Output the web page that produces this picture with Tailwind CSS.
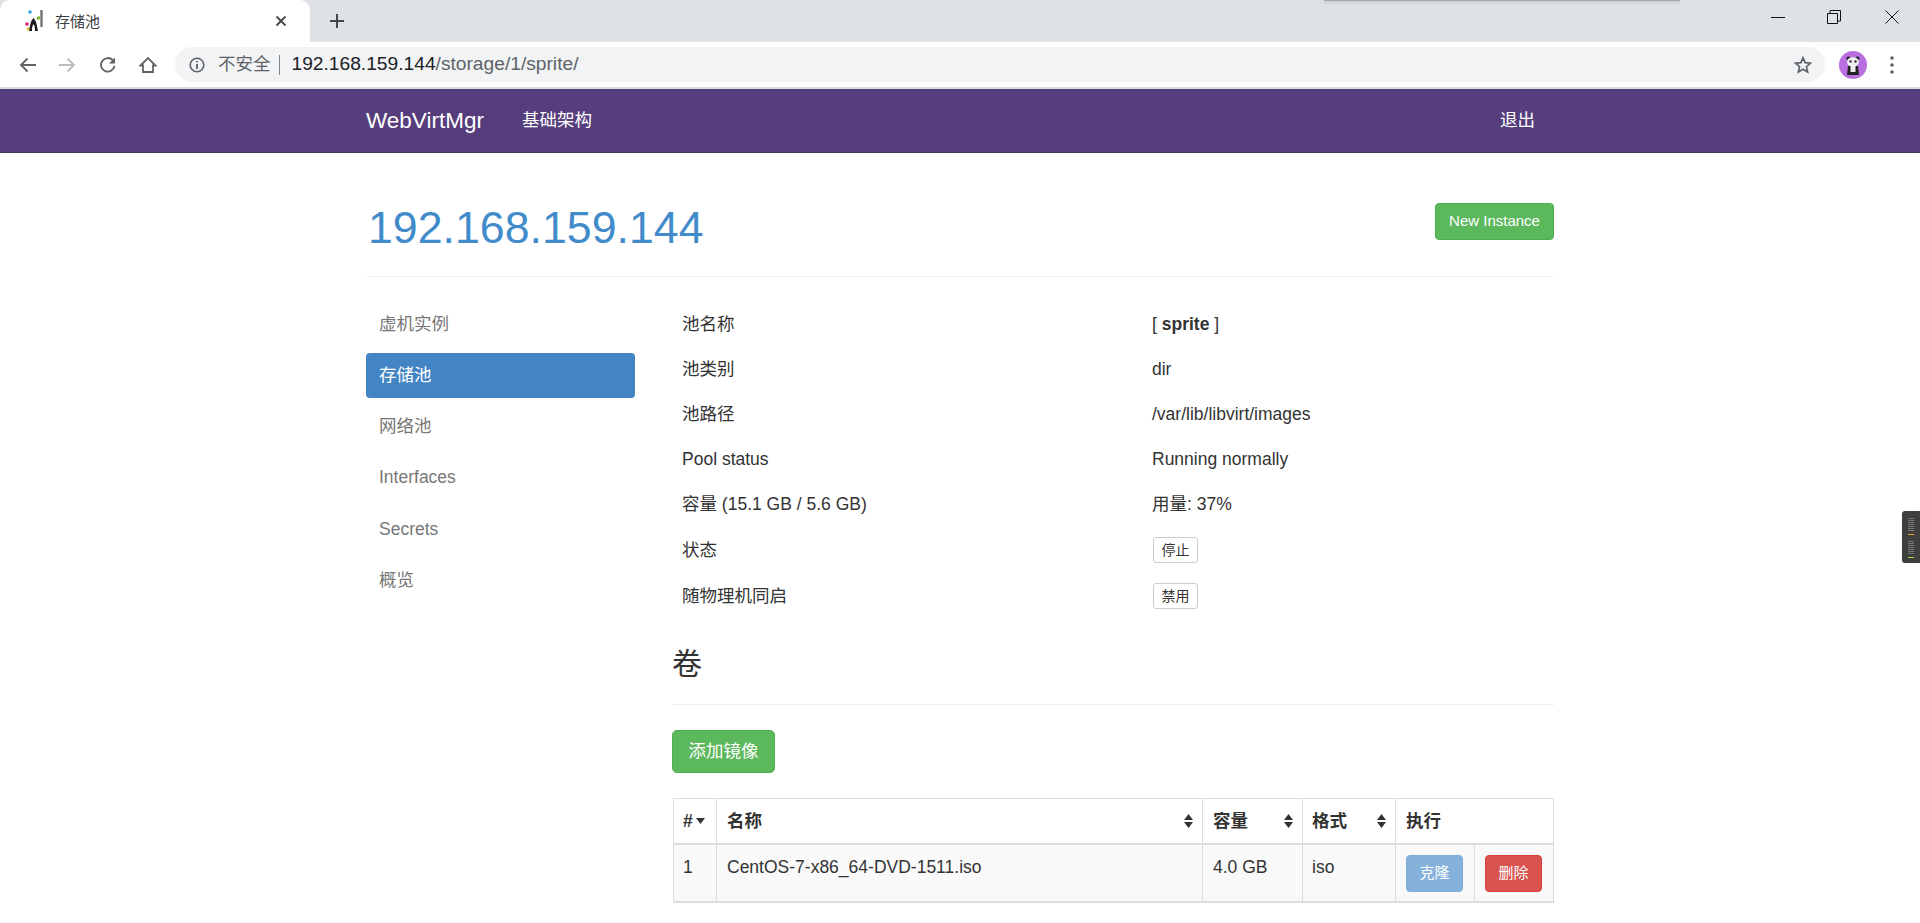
<!DOCTYPE html>
<html lang="zh-CN">
<head>
  <meta charset="UTF-8" />
  <title>存储池</title>
  <script src="https://cdn.jsdelivr.net/npm/@tailwindcss/browser@4"></script>
</head>
<body class="relative h-[923px] overflow-hidden bg-white font-['Liberation_Sans','Noto_Sans_CJK_SC',sans-serif] text-[17.5px] text-[#333]">
  <!-- Browser tab strip -->
  <div class="relative flex h-[42px] bg-[#dee1e6]">
    <div class="absolute left-[1324px] top-0 h-[1px] w-[356px] bg-[#a4a7ab] shadow-[0_1px_3px_#a4a7ab]"></div>
    <div class="flex h-[42px] w-[310px] items-center rounded-t-[10px] bg-white pl-[24px]">
      <svg class="h-[24px] w-[20px]" viewBox="0 0 20 24">
        <circle cx="6" cy="3" r="1.8" fill="#35a6e8"/>
        <path d="M17.5 1 V18" stroke="#6f7378" stroke-width="2.4"/>
        <path d="M13 10 L16 8" stroke="#78b833" stroke-width="3"/>
        <circle cx="3" cy="15" r="1.8" fill="#d81b78"/>
        <path d="M9.5 9 C6.5 12 6 17 5 22 H14 C13 17 12.5 12 9.5 9 Z" fill="#1c1c1c"/>
        <path d="M9.5 15 C8 17 8 20 8 22 H11 C11 20 11 17 9.5 15 Z" fill="#fff"/>
        <path d="M2 20 L5 18 L5 22 Z" fill="#e8c020"/>
      </svg>
      <span class="ml-[11px] w-[220px] text-[15px] leading-none text-[#3c4043]">存储池</span>
      <svg class="h-[12px] w-[12px]" viewBox="0 0 12 12"><path d="M1.5 1.5 L10.5 10.5 M10.5 1.5 L1.5 10.5" stroke="#45474a" stroke-width="1.8"/></svg>
    </div>
    <svg class="ml-[19px] mt-[13px] h-[16px] w-[16px]" viewBox="0 0 16 16"><path d="M8 1 V15 M1 8 H15" stroke="#45474a" stroke-width="2"/></svg>
    <div class="ml-auto flex">
      <div class="flex h-[34px] w-[56px] items-center justify-center"><svg class="h-[12px] w-[14px]" viewBox="0 0 14 12"><path d="M0 6.5 H14" stroke="#111" stroke-width="1"/></svg></div>
      <div class="flex h-[34px] w-[56px] items-center justify-center"><svg class="h-[14px] w-[14px]" viewBox="0 0 14 14"><path d="M.5 3.5 H10.5 V13.5 H.5 Z M3 3.5 V.5 H13.5 V11 H10.5" fill="none" stroke="#111" stroke-width="1"/></svg></div>
      <div class="flex h-[34px] w-[58px] items-center justify-center pl-[2px]"><svg class="h-[14px] w-[14px]" viewBox="0 0 14 14"><path d="M.5 .5 L13.5 13.5 M13.5 .5 L.5 13.5" stroke="#111" stroke-width="1"/></svg></div>
    </div>
  </div>

  <!-- Browser toolbar -->
  <div class="flex h-[45px] items-center bg-white pl-[19px]">
    <svg class="h-[18px] w-[18px]" viewBox="0 0 18 18"><path d="M17 9 H2 M8.5 2.5 L2 9 L8.5 15.5" fill="none" stroke="#5f6368" stroke-width="1.8"/></svg>
    <svg class="ml-[21px] h-[18px] w-[18px]" viewBox="0 0 18 18"><path d="M1 9 H16 M9.5 2.5 L16 9 L9.5 15.5" fill="none" stroke="#b9bbbe" stroke-width="1.8"/></svg>
    <svg class="ml-[23px] h-[18px] w-[18px]" viewBox="0 0 18 18"><path d="M15.5 10 A6.8 6.8 0 1 1 13.8 4.2" fill="none" stroke="#5f6368" stroke-width="1.8"/><path d="M16 1.5 V7.5 H10 Z" fill="#5f6368"/></svg>
    <svg class="ml-[22px] h-[18px] w-[18px]" viewBox="0 0 18 18"><path d="M1.5 9.5 L9 2 L16.5 9.5 H14 V16 H4 V9.5 Z" fill="none" stroke="#5f6368" stroke-width="1.8"/></svg>
    <div class="ml-[18px] flex h-[35px] w-[1650px] items-center rounded-full bg-[#f1f3f4] pl-[14px] pr-[13px]">
      <svg class="h-[16px] w-[16px]" viewBox="0 0 16 16"><circle cx="8" cy="8" r="6.8" fill="none" stroke="#5f6368" stroke-width="1.6"/><path d="M8 7 V12 M8 4 V5.6" stroke="#5f6368" stroke-width="1.8"/></svg>
      <span class="ml-[13px] text-[17.5px] text-[#5f6368]">不安全</span>
      <span class="ml-[8px] h-[20px] w-px bg-[#80868b]"></span>
      <span class="ml-[12px] text-[19.2px] text-[#202124]">192.168.159.144<span class="text-[#5f6368]">/storage/1/sprite/</span></span>
      <svg class="ml-auto h-[18px] w-[18px]" viewBox="0 0 18 18"><path d="M9 1.8 L11.1 6.7 L16.4 7.2 L12.4 10.7 L13.6 15.9 L9 13.2 L4.4 15.9 L5.6 10.7 L1.6 7.2 L6.9 6.7 Z" fill="none" stroke="#5f6368" stroke-width="1.7"/></svg>
    </div>
    <svg class="ml-[14px] h-[28px] w-[28px]" viewBox="0 0 28 28">
      <circle cx="14" cy="14" r="14" fill="#b96fe0"/>
      <circle cx="9.5" cy="7.5" r="2" fill="#222"/>
      <circle cx="18.5" cy="7.5" r="2" fill="#222"/>
      <path d="M9 15 H19 L20 24 H8 Z" fill="#222"/>
      <path d="M11.5 15 H16.5 V21 H11.5 Z" fill="#eee"/>
      <ellipse cx="14" cy="11" rx="6" ry="4.8" fill="#eee"/>
      <circle cx="11.5" cy="10.5" r="1.2" fill="#333"/>
      <circle cx="16.5" cy="10.5" r="1.2" fill="#333"/>
    </svg>
    <svg class="ml-[23px] h-[20px] w-[4px]" viewBox="0 0 4 20"><circle cx="2" cy="3" r="1.8" fill="#5f6368"/><circle cx="2" cy="10" r="1.8" fill="#5f6368"/><circle cx="2" cy="17" r="1.8" fill="#5f6368"/></svg>
  </div>
  <div class="h-[2px] bg-[#dadce0]"></div>

  <!-- Navbar -->
  <nav class="flex h-[64px] items-center border-b border-[#463265] bg-[#563d7c] pl-[366px] text-white">
    <a class="w-[156px] text-[22.5px]">WebVirtMgr</a>
    <a class="text-[17.5px]">基础架构</a>
    <a class="ml-[908px] text-[17.5px]">退出</a>
  </nav>

  <main class="mx-[366px] w-[1188px]">
    <div class="flex h-[124px] justify-between border-b border-[#eee] pl-[2px]">
      <h1 class="mt-[52px] text-[44.7px] leading-[46px] text-[#428bca]">192.168.159.144</h1>
      <button class="mt-[50px] flex h-[37px] w-[119px] items-center justify-center rounded-[4px] border border-[#4cae4c] bg-[#5cb85c] text-[15px] text-white">New Instance</button>
    </div>

    <div class="flex pt-[24px]">
      <!-- Sidebar -->
      <ul class="mt-[0.5px] flex w-[269px] flex-col gap-[6.2px] text-[#777]">
        <li class="flex h-[45px] items-center px-[13px]">虚机实例</li>
        <li class="flex h-[45px] items-center rounded-[4px] bg-[#4384c4] px-[13px] text-white">存储池</li>
        <li class="flex h-[45px] items-center px-[13px]">网络池</li>
        <li class="flex h-[45px] items-center px-[13px]">Interfaces</li>
        <li class="flex h-[45px] items-center px-[13px]">Secrets</li>
        <li class="flex h-[45px] items-center px-[13px]">概览</li>
      </ul>

      <div class="ml-[37px] w-[882px]">
        <div class="mt-px flex flex-col pl-[10px]">
          <div class="grid h-[45px] grid-cols-[470px_1fr] items-center"><span>池名称</span><span>[ <b>sprite</b> ]</span></div>
          <div class="grid h-[45px] grid-cols-[470px_1fr] items-center"><span>池类别</span><span>dir</span></div>
          <div class="grid h-[45px] grid-cols-[470px_1fr] items-center"><span>池路径</span><span>/var/lib/libvirt/images</span></div>
          <div class="grid h-[45px] grid-cols-[470px_1fr] items-center"><span>Pool status</span><span>Running normally</span></div>
          <div class="grid h-[45px] grid-cols-[470px_1fr] items-center"><span>容量 (15.1 GB / 5.6 GB)</span><span>用量: 37%</span></div>
          <div class="grid h-[46px] grid-cols-[470px_1fr] items-center"><span>状态</span><span><button class="ml-px flex h-[26px] w-[45px] items-center justify-center rounded-[3px] border border-[#ccc] text-[14px]">停止</button></span></div>
          <div class="grid h-[46px] grid-cols-[470px_1fr] items-center"><span>随物理机同启</span><span><button class="ml-px flex h-[26px] w-[45px] items-center justify-center rounded-[3px] border border-[#ccc] text-[14px]">禁用</button></span></div>
        </div>

        <div class="flex h-[85.5px] items-end border-b border-[#eee] pb-[25px] text-[30px] leading-none">卷</div>

        <button class="mt-[25px] flex h-[43px] w-[103px] items-center justify-center rounded-[5px] border border-[#4cae4c] bg-[#5cb85c] text-white">添加镜像</button>

        <table class="mt-[25px] ml-px w-[880px] table-fixed border-collapse">
          <colgroup><col class="w-[43px]"/><col class="w-[486px]"/><col class="w-[100px]"/><col class="w-[93px]"/><col class="w-[79px]"/><col class="w-[79px]"/></colgroup>
          <thead>
            <tr class="h-[46px] font-bold">
              <th class="border border-b-2 border-[#ddd] pl-[9px] text-left"><span class="flex items-center gap-[3px]">#<svg class="h-[6px] w-[9px]" viewBox="0 0 9 6"><path d="M0 0 H9 L4.5 6 Z" fill="#333"/></svg></span></th>
              <th class="border border-b-2 border-[#ddd] pl-[10px] pr-[9px] text-left"><span class="flex items-center justify-between">名称<svg class="h-[14px] w-[9px]" viewBox="0 0 9 14"><path d="M0 6 L4.5 0 L9 6 Z M0 8 H9 L4.5 14 Z" fill="#333"/></svg></span></th>
              <th class="border border-b-2 border-[#ddd] pl-[10px] pr-[9px] text-left"><span class="flex items-center justify-between">容量<svg class="h-[14px] w-[9px]" viewBox="0 0 9 14"><path d="M0 6 L4.5 0 L9 6 Z M0 8 H9 L4.5 14 Z" fill="#333"/></svg></span></th>
              <th class="border border-b-2 border-[#ddd] pl-[9px] pr-[9px] text-left"><span class="flex items-center justify-between">格式<svg class="h-[14px] w-[9px]" viewBox="0 0 9 14"><path d="M0 6 L4.5 0 L9 6 Z M0 8 H9 L4.5 14 Z" fill="#333"/></svg></span></th>
              <th colspan="2" class="border border-b-2 border-[#ddd] pl-[10px] text-left">执行</th>
            </tr>
          </thead>
          <tbody>
            <tr class="h-[58px] bg-[#f9f9f9]">
              <td class="border border-b-2 border-[#ddd] pl-[9px] pt-[9px] align-top">1</td>
              <td class="border border-b-2 border-[#ddd] pl-[10px] pt-[9px] align-top">CentOS-7-x86_64-DVD-1511.iso</td>
              <td class="border border-b-2 border-[#ddd] pl-[10px] pt-[9px] align-top">4.0 GB</td>
              <td class="border border-b-2 border-[#ddd] pl-[9px] pt-[9px] align-top">iso</td>
              <td class="border border-b-2 border-[#ddd] pl-[10px]"><button class="flex h-[37px] w-[57px] items-center justify-center rounded-[4px] border border-[#7eaed8] bg-[#85b2da] text-[15px] text-white">克隆</button></td>
              <td class="border border-b-2 border-[#ddd] pl-[10px]"><button class="flex h-[37px] w-[57px] items-center justify-center rounded-[4px] border border-[#d43f3a] bg-[#d9534f] text-[15px] text-white">删除</button></td>
            </tr>
          </tbody>
        </table>
      </div>
    </div>
  </main>

  <!-- Floating side widget -->
  <div class="absolute left-[1902px] top-[511px] h-[52px] w-[18px] rounded-l-[3px] bg-[#3f3f3f]">
    <svg class="h-[52px] w-[18px]" viewBox="0 0 18 52">
      <path d="M6 7.5 H12 M6 9.5 H12 M6 11.5 H12 M6 13.5 H12 M6 15.5 H12 M6 17.5 H12 M6 19.5 H12" stroke="#777"/>
      <path d="M6 23.5 H12" stroke="#f5a623"/>
      <path d="M6 30.5 H12 M6 32.5 H12 M6 34.5 H12 M6 36.5 H12 M6 38.5 H12 M6 40.5 H12 M6 42.5 H12" stroke="#777"/>
      <path d="M6 46.5 H12" stroke="#9ee04a"/>
    </svg>
  </div>
</body>
</html>
